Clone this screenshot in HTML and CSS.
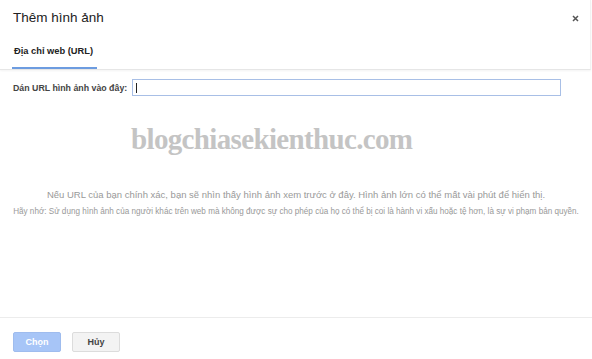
FILE: index.html
```html
<!DOCTYPE html>
<html lang="vi">
<head>
<meta charset="utf-8">
<title>Thêm hình ảnh</title>
<link rel="stylesheet" href="styles.css">
</head>
<body>
<div class="dialog">
  <div class="header">
    <div class="title-row">
      <div class="title">Thêm hình ảnh</div>
      <div class="close">
        <svg width="7" height="7" viewBox="0 0 7 7"><path d="M1 1L6 6M6 1L1 6" stroke="#555" stroke-width="1.5"/></svg>
      </div>
    </div>
    <div class="tabs">
      <div class="tab active">Địa chỉ web (URL)</div>
    </div>
  </div>
  <div class="body">
    <div class="url-row">
      <label class="url-label">Dán URL hình ảnh vào đây:</label>
      <div class="url-input"><span class="caret"></span></div>
    </div>
    <div class="watermark">blogchiasekienthuc.com</div>
    <div class="hint">Nếu URL của bạn chính xác, bạn sẽ nhìn thấy hình ảnh xem trước ở đây. Hình ảnh lớn có thể mất vài phút để hiển thị.</div>
    <div class="note">Hãy nhớ: Sử dụng hình ảnh của người khác trên web mà không được sự cho phép của họ có thể bị coi là hành vi xấu hoặc tệ hơn, là sự vi phạm bản quyền.</div>
  </div>
  <div class="footer">
    <button class="btn btn-primary">Chọn</button>
    <button class="btn btn-default">Hủy</button>
  </div>
</div>
</body>
</html>
```
FILE: styles.css
```css
html, body {
  margin: 0;
  padding: 0;
  background: #fff;
}
body {
  font-family: "Liberation Sans", Arial, sans-serif;
  color: #222;
}
.dialog {
  width: 592px;
  height: 359px;
  display: flex;
  flex-direction: column;
  background: #fff;
}
.header {
  height: 70px;
  border-bottom: 1px solid #e6e6e6;
  box-shadow: 0 1px 2px rgba(0,0,0,0.05);
  display: flex;
  flex-direction: column;
  border-right: 1px solid #f2f2f2;
  box-sizing: border-box;
  width: 591px;
}
.title-row {
  display: flex;
  justify-content: space-between;
  align-items: center;
  padding: 9px 11px 0 13px;
  height: 18px;
}
.title {
  font-size: 13.5px;
  color: #222;
  line-height: 18px;
  white-space: nowrap;
}
.close {
  width: 7px;
  height: 7px;
  display: flex;
}
.close svg { display: block; }
.tabs {
  display: flex;
  padding: 0 0 0 12px;
  margin-top: 19px;
}
.tab {
  font-size: 9.3px;
  font-weight: bold;
  color: #222;
  padding: 0 2px 10px 2px;
  width: 81px;
  box-sizing: content-box;
  line-height: 11px;
  white-space: nowrap;
}
.tab.active {
  border-bottom: 2px solid #6d9ce0;
}
.body {
  flex: 1;
  display: flex;
  flex-direction: column;
  padding: 9px 13px 0 13px;
  border-bottom: 1px solid #ececec;
}
.url-row {
  display: flex;
  align-items: center;
  gap: 5px;
  padding-right: 18px;
}
.url-label {
  font-size: 8.8px;
  font-weight: bold;
  color: #444;
  white-space: nowrap;
  flex-shrink: 0;
  width: 114px;
}
.url-input {
  flex: 1;
  height: 15px;
  border: 1px solid #a8bfe6;
  display: flex;
  align-items: center;
  padding-left: 3px;
}
.caret {
  display: block;
  width: 1px;
  height: 10px;
  background: #222;
}
.watermark {
  font-family: "Liberation Serif", "DejaVu Serif", serif;
  font-weight: bold;
  font-size: 29px;
  color: #c4c4c4;
  margin: 26px 0 0 118px;
  line-height: 34px;
  letter-spacing: -0.65px;
  white-space: nowrap;
}
.hint {
  font-size: 9.5px;
  color: #999;
  text-align: center;
  margin-top: 32px;
  line-height: 13px;
  white-space: nowrap;
}
.note {
  font-size: 8.15px;
  color: #999;
  text-align: center;
  margin-top: 5px;
  line-height: 11px;
  white-space: nowrap;
}
.footer {
  height: 41px;
  display: flex;
  align-items: flex-start;
  gap: 11px;
  padding: 14px 0 0 13px;
  box-sizing: border-box;
}
.btn {
  width: 48px;
  height: 20px;
  font-family: "Liberation Sans", Arial, sans-serif;
  font-size: 9px;
  font-weight: bold;
  border-radius: 2px;
  padding: 0;
}
.btn-primary {
  background: #a7c5f7;
  border: 1px solid #9fbcee;
  color: #fff;
}
.btn-default {
  background: #f3f3f3;
  border: 1px solid #dcdcdc;
  color: #444;
}
```
